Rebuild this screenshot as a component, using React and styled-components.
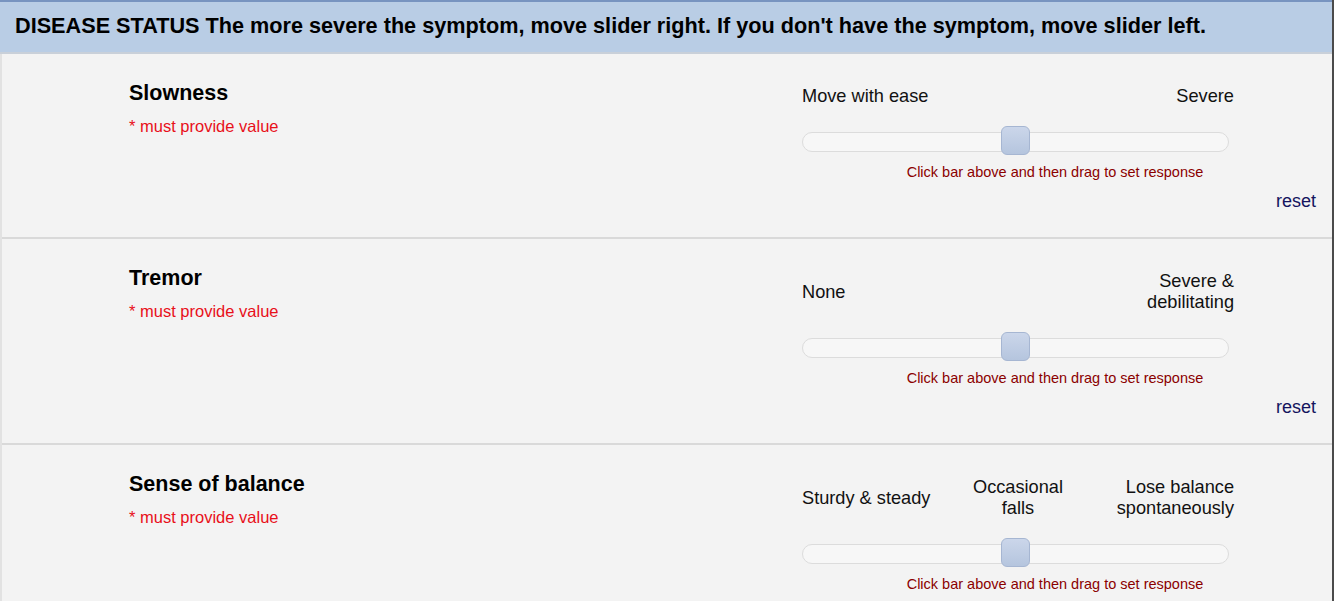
import React from "react";
import styled, { createGlobalStyle } from "styled-components";

const Global = createGlobalStyle`
  html, body { margin: 0; padding: 0; background: #f3f3f3; }
  body { font-family: "Liberation Sans", Arial, sans-serif; }
`;

const Page = styled.div`
  width: 1334px;
  height: 601px;
  box-sizing: border-box;
  border-right: 2px solid #4b4b4b;
  background: #f3f3f3;
  overflow: hidden;
`;

const Header = styled.div`
  box-sizing: border-box;
  height: 54px;
  background: #b9cde5;
  border-top: 2px solid #7894c0;
  border-bottom: 2px solid #c9d0d9;
  padding: 12px 0 0 15px;
  font-size: 21.66px;
  line-height: 24px;
  font-weight: bold;
  color: #000;
  white-space: nowrap;
`;

const Body = styled.div`
  border-left: 2px solid #e2e2e2;
`;

const Row = styled.div`
  display: grid;
  grid-template-columns: 673px 514px;
  padding-left: 127px;
  border-bottom: 2px solid #d9d9d9;
`;

const Left = styled.div`
  padding-top: 27px;
`;

const Title = styled.div`
  font-size: 21.5px;
  line-height: 24px;
  font-weight: bold;
  color: #000;
`;

const Required = styled.div`
  margin-top: 11px;
  font-size: 16.5px;
  line-height: 20px;
  color: #e8101a;
`;

const Right = styled.div`
  padding-top: 32px;
  padding-bottom: 25.5px;
`;

const Labels = styled.div`
  width: 432px;
  display: grid;
  grid-template-columns: 1fr auto 1fr;
  align-items: center;
  font-size: 18.2px;
  line-height: 21px;
  color: #111;
`;

const Label = styled.div`
  justify-self: ${(p) => p.$align};
  text-align: ${(p) => (p.$align === "start" ? "left" : p.$align === "end" ? "right" : "center")};
`;

const Track = styled.div`
  position: relative;
  box-sizing: border-box;
  width: 427px;
  height: 20px;
  margin-top: 25px;
  background: #f7f7f7;
  border: 1px solid #dcdcdc;
  border-radius: 10px;
`;

const Handle = styled.div`
  position: absolute;
  box-sizing: border-box;
  left: 198px;
  top: -7px;
  width: 29px;
  height: 29px;
  border-radius: 6px;
  border: 1px solid #a6b6d2;
  background: linear-gradient(#cbd6ea, #b5c5de);
`;

const Hint = styled.div`
  margin-top: 11.5px;
  padding-right: 8px;
  text-align: center;
  font-size: 14.5px;
  line-height: 17px;
  color: #8b0000;
`;

const Reset = styled.div`
  margin-top: 10px;
  text-align: right;
  font-size: 18px;
  line-height: 21px;
  color: #14145e;
`;

const questions = [
  { title: "Slowness", labels: [["Move with ease"], null, ["Severe"]] },
  { title: "Tremor", labels: [["None"], null, ["Severe &", "debilitating"]] },
  {
    title: "Sense of balance",
    labels: [["Sturdy & steady"], ["Occasional", "falls"], ["Lose balance", "spontaneously"]],
  },
];

const aligns = ["start", "center", "end"];

export default function App() {
  return (
    <Page>
      <Global />
      <Header>
        DISEASE STATUS The more severe the symptom, move slider right. If you don't have the symptom, move slider left.
      </Header>
      <Body>
        {questions.map((q) => (
          <Row key={q.title}>
            <Left>
              <Title>{q.title}</Title>
              <Required>* must provide value</Required>
            </Left>
            <Right>
              <Labels>
                {q.labels.map((l, i) => (
                  <Label key={i} $align={aligns[i]}>
                    {l ? l.map((line, j) => <div key={j}>{line}</div>) : null}
                  </Label>
                ))}
              </Labels>
              <Track>
                <Handle />
              </Track>
              <Hint>Click bar above and then drag to set response</Hint>
              <Reset>reset</Reset>
            </Right>
          </Row>
        ))}
      </Body>
    </Page>
  );
}
